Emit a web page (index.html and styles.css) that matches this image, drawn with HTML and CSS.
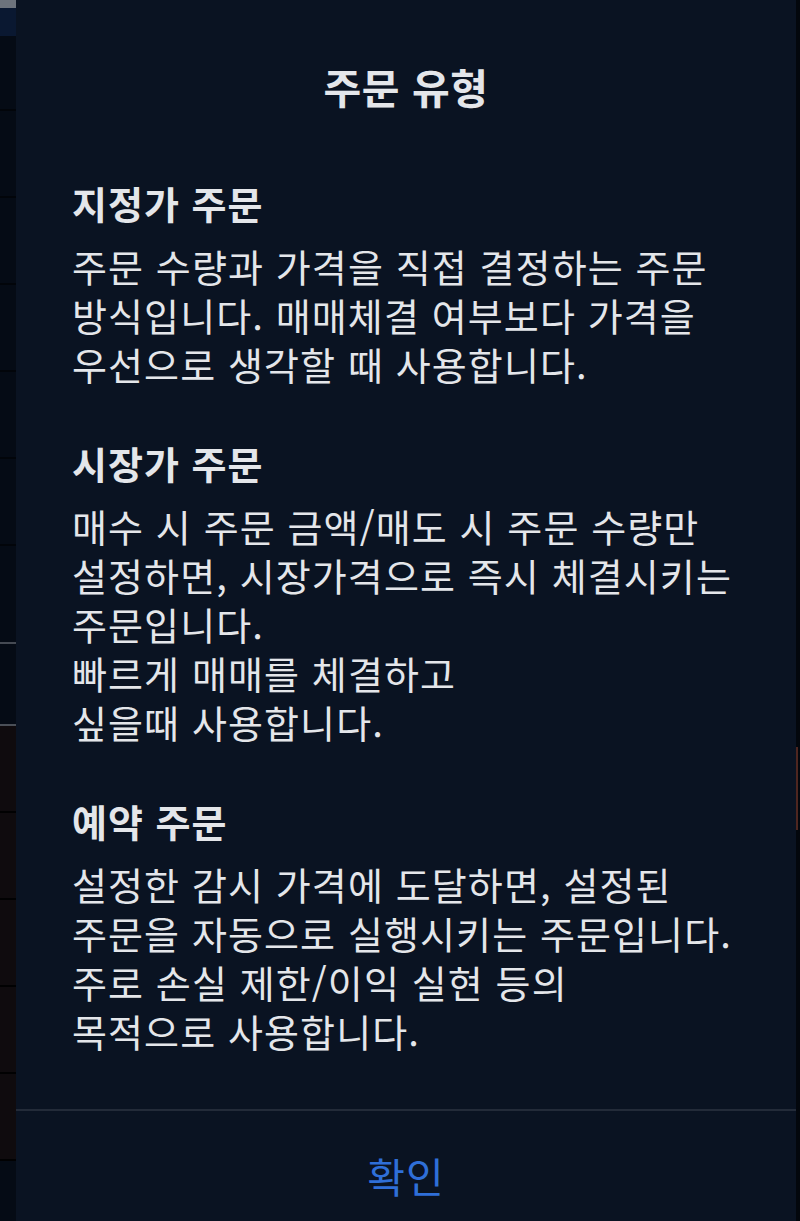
FILE: index.html
```html
<!DOCTYPE html>
<html lang="ko">
<head>
    <meta charset="UTF-8">
    <meta name="viewport" content="width=device-width, initial-scale=1.0">
    <title>주문 유형</title>
    <link rel="stylesheet" href="styles.css">
</head>
<body>

    <div class="screen">
        <!-- page behind the sheet, only its edges show -->
        <div class="back-left">
            <div class="back-top"></div>
            <div class="back-row first"></div>
            <div class="back-row"></div>
            <div class="back-row"></div>
            <div class="back-row"></div>
            <div class="back-row"></div>
            <div class="back-row"></div>
            <div class="back-row tall"></div>
            <div class="back-row split"></div>
            <div class="back-row warm"></div>
            <div class="back-row warm"></div>
            <div class="back-row warm"></div>
            <div class="back-row warm"></div>
            <div class="back-row warm"></div>
        </div>

        <div class="sheet">
            <div class="sheet-body">
                <h1 class="sheet-title">주문 유형</h1>

                <div class="order-type">
                    <h2>지정가 주문</h2>
                    <p>주문 수량과 가격을 직접 결정하는 주문<br>방식입니다. 매매체결 여부보다 가격을<br>우선으로 생각할 때 사용합니다.</p>
                </div>

                <div class="order-type">
                    <h2>시장가 주문</h2>
                    <p>매수 시 주문 금액/매도 시 주문 수량만<br>설정하면, 시장가격으로 즉시 체결시키는<br>주문입니다.<br>빠르게 매매를 체결하고<br>싶을때 사용합니다.</p>
                </div>

                <div class="order-type">
                    <h2>예약 주문</h2>
                    <p>설정한 감시 가격에 도달하면, 설정된<br>주문을 자동으로 실행시키는 주문입니다.<br>주로 손실 제한/이익 실현 등의<br>목적으로 사용합니다.</p>
                </div>
            </div>

            <div class="sheet-footer">
                <button type="button" class="confirm-btn">확인</button>
            </div>
        </div>

        <div class="back-right">
            <div class="mark"></div>
        </div>
    </div>

</body>
</html>
```

FILE: styles.css
```css
* {
    box-sizing: border-box;
}

body {
    margin: 0;
    background-color: #03070d;
    font-family: "Noto Sans CJK KR", "Noto Sans", sans-serif;
}

.screen {
    display: flex;
    width: 800px;
    height: 1221px;
    overflow: hidden;
}

/* left edge of the page underneath */
.back-left {
    width: 16px;
    flex-shrink: 0;
    display: flex;
    flex-direction: column;
    background-color: #050b15;
}

.back-top {
    height: 36px;
    border-top: 8px solid #6d737c;
    background-color: #0a1831;
}

.back-row {
    flex-shrink: 0;
    height: 87px;
    border-bottom: 2px solid #02050a;
}

.back-row.first {
    height: 75px;
}

.back-row.tall {
    height: 98px;
    border-bottom: 2px solid #454a53;
}

.back-row.split {
    height: 82px;
    border-bottom: 2px solid #4a4f57;
}

.back-row.warm {
    background-color: #0f0b0e;
    border-bottom-color: #010102;
}

.back-right {
    width: 4px;
    flex-shrink: 0;
    padding-top: 747px;
}

.back-right .mark {
    width: 2px;
    height: 83px;
    background-color: #4e2620;
}

/* bottom sheet */
.sheet {
    flex: 1;
    display: flex;
    flex-direction: column;
    background-color: #0a1322;
    color: #e4e6ea;
}

.sheet-body {
    padding: 61px 56px 0;
}

.sheet-title {
    margin: 0;
    text-align: center;
    font-size: 41px;
    font-weight: 700;
    line-height: 50px;
    letter-spacing: 0.5px;
}

.order-type {
    margin-top: 50px;
}

.order-type:first-of-type {
    margin-top: 67px;
}

.order-type h2 {
    margin: 0 0 14px;
    font-size: 38px;
    font-weight: 700;
    line-height: 49px;
    letter-spacing: 1px;
}

.order-type p {
    margin: 0;
    font-size: 38px;
    font-weight: 400;
    line-height: 49px;
    letter-spacing: 1.1px;
}

.sheet-footer {
    margin-top: 54px;
    border-top: 2px solid #232b39;
    text-align: center;
}

.confirm-btn {
    margin-top: 39px;
    padding: 0 20px;
    border: none;
    background: none;
    color: #2f6fd8;
    font-family: inherit;
    font-size: 41px;
    line-height: 50px;
    letter-spacing: 1px;
}
```
